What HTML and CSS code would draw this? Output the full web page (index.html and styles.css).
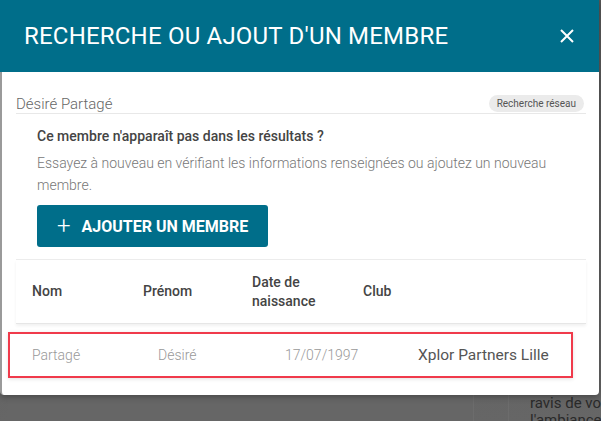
FILE: index.html
```html
<!DOCTYPE html>
<html lang="fr">
<head>
  <meta charset="UTF-8" />
  <meta name="viewport" content="width=device-width, initial-scale=1" />
  <title>Recherche ou ajout d'un membre</title>
  <link rel="stylesheet" href="styles.css">
</head>
<body>
  <div class="modal">
    <div class="modal-header">
      <h1>RECHERCHE OU AJOUT D'UN MEMBRE</h1>
      <button class="close" aria-label="Fermer">
        <svg width="16" height="16" viewBox="0 0 16 16"><path d="M2 2 L14 14 M14 2 L2 14" stroke="#fff" stroke-width="2" fill="none"/></svg>
      </button>
    </div>

    <div class="modal-body">
      <div class="search-row">
        <span class="search-name">Désiré Partagé</span>
        <span class="pill">Recherche réseau</span>
      </div>

      <div class="notice">
        <h2>Ce membre n'apparaît pas dans les résultats ?</h2>
        <p>Essayez à nouveau en vérifiant les informations renseignées ou ajoutez un nouveau membre.</p>
        <button class="add-btn"><span class="plus">+</span>AJOUTER UN MEMBRE</button>
      </div>

      <div class="table-head">
        <div class="col c1">Nom</div>
        <div class="col c2">Prénom</div>
        <div class="col c3">Date de<br>naissance</div>
        <div class="col c4">Club</div>
      </div>

      <div class="table-row">
        <div class="cell r1">Partagé</div>
        <div class="cell r2">Désiré</div>
        <div class="cell r3">17/07/1997</div>
        <div class="cell club">Xplor Partners Lille</div>
      </div>
    </div>
  </div>

  <div class="page-behind">
    <div class="behind-card"></div>
    <div class="behind-sep"></div>
    <div class="behind-text">ravis de vous<br>l'ambiance</div>
  </div>
</body>
</html>
```

FILE: styles.css
```css
body {
  margin: 0;
  width: 601px;
  height: 421px;
  overflow: hidden;
  font-family: Roboto, "Liberation Sans", sans-serif;
  background: linear-gradient(#575757, #666);
}
.modal {
  width: 599px;
  height: 395px;
  background: #fff;
  border-radius: 0 0 4px 4px;
  box-shadow: 0 2px 6px rgba(0, 0, 0, 0.3);
  position: relative;
  z-index: 1;
  border-left: 2px solid #9a9a9a;
  box-sizing: border-box;
}
.modal-header {
  height: 72px;
  margin-left: -2px;
  background: #006e8a;
  display: flex;
  align-items: center;
  justify-content: space-between;
  padding: 0 24px 0 24px;
}
.modal-header h1 {
  margin: 0;
  color: #fff;
  font-size: 24px;
  font-weight: 400;
  letter-spacing: 0.2px;
}
.close {
  background: none;
  border: none;
  padding: 0;
  display: flex;
}
.modal-body {
  padding: 0 13px 0 14px;
}
.search-row {
  height: 42px;
  display: flex;
  align-items: center;
  justify-content: space-between;
  border-bottom: 1px solid #e8e8e8;
  padding-top: 22px;
  box-sizing: border-box;
}
.search-name {
  font-size: 15px;
  font-weight: 300;
  color: #666;
}
.pill {
  background: #ebebeb;
  color: #555;
  font-size: 10px;
  padding: 3px 8px;
  border-radius: 10px;
  margin-right: 2px;
}
.notice {
  padding: 13px 0 12px 21px;
  border-bottom: 1px solid #ececec;
}
.notice h2 {
  margin: 0;
  font-size: 14px;
  font-weight: 500;
  color: #444;
  line-height: 18px;
}
.notice p {
  margin: 7px 0 9px;
  font-size: 14px;
  font-weight: 300;
  color: #777;
  line-height: 22px;
  width: 530px;
}
.add-btn {
  width: 231px;
  height: 42px;
  background: #006e8a;
  color: #fff;
  border: none;
  border-radius: 3px;
  font-family: inherit;
  font-size: 16px;
  font-weight: 700;
  display: flex;
  align-items: center;
  padding: 0 0 0 20px;
}
.plus {
  font-size: 24px;
  font-weight: 300;
  margin-right: 11px;
  line-height: 1;
}
.table-head {
  height: 63px;
  display: flex;
  align-items: center;
  padding-left: 16px;
  border-bottom: 1px solid #e6e6e6;
  box-shadow: 0 2px 3px rgba(0, 0, 0, 0.06);
  font-size: 14px;
  font-weight: 500;
  color: #444;
  line-height: 19px;
}
.col.c1 { width: 111px; }
.col.c2 { width: 109px; }
.col.c3 { width: 111px; }
.table-row {
  margin: 8px 0 0 -8px;
  width: 565px;
  height: 46px;
  box-sizing: border-box;
  border: 2px solid #f03a4b;
  display: flex;
  align-items: center;
  padding-left: 22px;
  box-shadow: 0 1px 4px rgba(0, 0, 0, 0.12);
  font-size: 14px;
  font-weight: 300;
  color: #999;
}
.cell.r1 { width: 126px; }
.cell.r2 { width: 127px; }
.cell.r3 { width: 133px; }
.cell.club {
  font-size: 15.5px;
  color: #555;
  font-weight: 400;
}
.page-behind {
  height: 26px;
  display: flex;
  overflow: hidden;
}
.behind-card {
  flex: 0 0 465px;
  margin-left: 8px;
  background: #666;
}
.behind-sep {
  flex: 0 0 34px;
  border-left: 1px solid #6c6c6c;
  border-right: 1px solid #6c6c6c;
  margin-right: 21px;
}
.behind-text {
  flex-shrink: 0;
  font-size: 15px;
  line-height: 17px;
  color: #2a2a2a;
  white-space: nowrap;
}
```
